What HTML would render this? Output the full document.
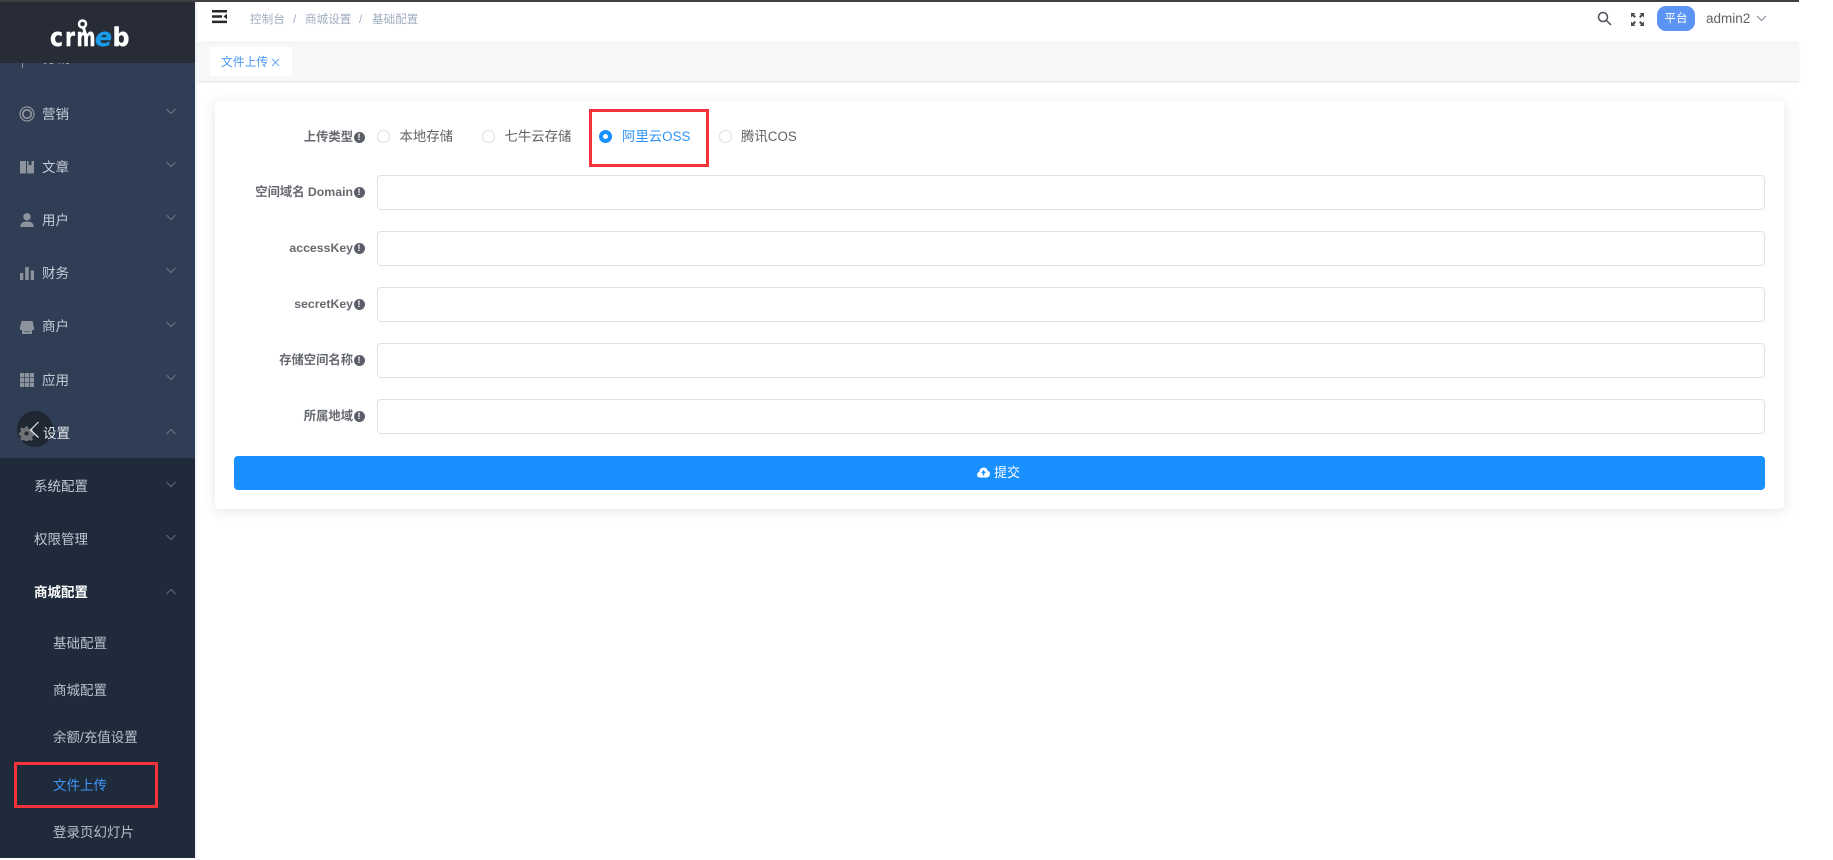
<!DOCTYPE html>
<html lang="zh"><head><meta charset="utf-8"><title>文件上传</title>
<style>
html,body{margin:0;padding:0;background:#fff;width:1833px;height:860px;overflow:hidden}
body{position:relative;font-family:"Liberation Sans","Noto Sans CJK SC",sans-serif;font-size:13.5px;color:#515a6e}
.a{position:absolute;white-space:nowrap}
.t{position:absolute;white-space:nowrap;line-height:20px;height:20px;transform:translateY(-10px)}
#side{position:absolute;left:0;top:2px;width:195px;height:856px;background:#2f3e55;overflow:hidden}
#sub{position:absolute;left:0;top:456px;width:195px;height:400px;background:#1f2b3b}
.m{color:#c4ccd6;font-size:13.5px;left:42px}
.s{color:#c0c8d2;font-size:13.5px;left:34px}
.ss{color:#b8c0ca;font-size:13.5px;left:53px}
.ch{position:absolute;left:165px;width:12px;height:7px}
.ico{position:absolute;left:20px;width:14px;height:14px}
.lb{position:absolute;right:1480px;text-align:right;font-weight:bold;font-size:12.3px;color:#666a70;line-height:20px;white-space:nowrap;transform:translateY(-10px)}
.inf{position:absolute;left:353.500px;width:11px;height:11px;border-radius:50%;background:#5a5e66;color:#fff;font-size:9px;line-height:11px;text-align:center;font-weight:bold}
.inp{position:absolute;left:377px;width:1388px;height:35px;box-sizing:border-box;border:1px solid #dfe1e7;border-radius:4px;background:#fff}
.r{position:absolute;top:130px;width:13px;height:13px;box-sizing:border-box;border:1px solid #dcdee2;border-radius:50%;background:#fff}
.rt{font-size:13.400px;color:#606266;top:137px}
.lg{font-family:"DejaVu Sans",sans-serif;font-weight:bold;font-size:26px;fill:#fff;stroke:#fff;stroke-width:.4;stroke-linejoin:round}
</style></head><body>
<div class="a" style="left:0;top:0;width:1799px;height:2px;background:#3f3f42"></div>

<div id="side">
 <div id="sub"></div>
</div>
<div class="a" style="left:0;top:2px;width:195px;height:61px;background:#282c37"></div>
<div class="a" style="left:195px;top:2px;width:2px;height:856px;background:#f0f2f5"></div>

<!-- logo -->
<svg class="a" style="left:45px;top:15px" width="90" height="40" viewBox="0 0 90 40">
 <text class="lg" x="5" y="31" textLength="13" lengthAdjust="spacingAndGlyphs">c</text>
 <text class="lg" x="20" y="31" textLength="10" lengthAdjust="spacingAndGlyphs">r</text>
 <text class="lg" x="31.500" y="31" textLength="19" lengthAdjust="spacingAndGlyphs">m</text>
 <text class="lg" x="50" y="31" textLength="17" lengthAdjust="spacingAndGlyphs" style="fill:#1a9be8;stroke:#1a9be8;font-style:italic">e</text>
 <text class="lg" x="67.500" y="31" textLength="17" lengthAdjust="spacingAndGlyphs">b</text>
 <circle cx="37.500" cy="9" r="3.500" fill="none" stroke="#fff" stroke-width="2.500"/>
 <path d="M38.500 12.500l1.500 5.500" stroke="#fff" stroke-width="3" fill="none"/>
</svg>

<!-- clipped partial item -->
<div class="a" style="left:0;top:63px;width:195px;height:6px;overflow:hidden">
 <div class="t m" style="top:-4px;left:43px;color:#aab3bf">分销</div>
 <div class="a" style="left:22px;top:0;width:1px;height:5px;background:#8b94a1"></div>
</div>

<!-- menu icons -->
<svg class="ico" style="top:106px;left:19px;width:16px;height:16px" viewBox="0 0 16 16" fill="none" stroke="#8d939c"><circle cx="8" cy="8" r="7" stroke-width="1.300"/><circle cx="8" cy="8" r="4.200" stroke-width="1.800"/></svg>
<svg class="ico" style="top:160px" viewBox="0 0 14 14" fill="#8d939c"><path d="M0 1h6v12.500H0zM7 1h1.500v4.500l1.500-1 1.500 1V1H14v12.500H7z"/></svg>
<svg class="ico" style="top:213px" viewBox="0 0 14 14" fill="#8d939c"><circle cx="7" cy="3.800" r="3.700"/><path d="M.3 14c0-4 2.700-5.500 6.700-5.500s6.700 1.500 6.700 5.500z"/></svg>
<svg class="ico" style="top:266px" viewBox="0 0 14 14" fill="#8d939c"><path d="M0 7h3.300v7H0zM5.300 1h3.400v13H5.300zM10.700 4.500H14V14h-3.300z"/></svg>
<svg class="ico" style="top:320px" viewBox="0 0 14 14" fill="#8d939c"><path d="M1.500 1h11L14 7.500v2.500H0V7.500zM2 10h10V14H2z"/><path d="M4 11h6v1H4z" fill="#5d6673"/></svg>
<svg class="ico" style="top:373px" viewBox="0 0 14 14" fill="#8d939c"><path d="M0 0h4.200v4.200H0zM4.900 0h4.200v4.200H4.900zM9.800 0H14v4.200H9.800zM0 4.900h4.200v4.200H0zM4.900 4.900h4.200v4.200H4.900zM9.800 4.900H14v4.200H9.800zM0 9.800h4.200V14H0zM4.900 9.800h4.200V14H4.900zM9.800 9.800H14V14H9.800z"/></svg>

<!-- collapse button -->
<div class="a" style="left:17px;top:411px;width:36px;height:36px;border-radius:50%;background:#1f2733"></div>
<svg class="ico" style="top:426px;left:19px;width:15px;height:15px" viewBox="0 0 14 14" fill="#6f7276"><path d="M5.800 0h2.400l.4 2 1.500.7 1.800-1 1.600 1.800-1.100 1.600.6 1.500 2 .4v2.400l-2 .4-.6 1.500 1.100 1.700-1.700 1.600-1.700-1-1.500.6-.4 1.800H5.800l-.4-1.900-1.500-.6-1.700 1L.5 12.300l1-1.700-.6-1.500L-1 8.700V6.300l1.900-.4.600-1.500-1-1.700L2.200 1l1.700 1 1.500-.6z" transform="translate(.6 .4) scale(.93)"/><circle cx="7" cy="7" r="2" fill="#242c38"/></svg>
<svg class="a" style="left:29px;top:421px" width="11" height="18" viewBox="0 0 11 18" fill="none" stroke="#e4e6e9" stroke-width="1.200"><path d="M9.500 1 1.500 9l8 7.500"/></svg>

<!-- menu text -->
<div class="t m" style="top:115px">营销</div>
<div class="t m" style="top:168px">文章</div>
<div class="t m" style="top:221px">用户</div>
<div class="t m" style="top:274px">财务</div>
<div class="t m" style="top:327px">商户</div>
<div class="t m" style="top:381px">应用</div>
<div class="t m" style="top:434px;left:43px;color:#e6e9ed">设置</div>
<div class="t s" style="top:487px">系统配置</div>
<div class="t s" style="top:540px">权限管理</div>
<div class="t s" style="top:593px;color:#fff;font-weight:bold">商城配置</div>
<div class="t ss" style="top:644px">基础配置</div>
<div class="t ss" style="top:691px">商城配置</div>
<div class="t ss" style="top:738px">余额/充值设置</div>
<div class="t ss" style="top:786px;color:#3f95f5">文件上传</div>
<div class="t ss" style="top:832.500px">登录页幻灯片</div>

<!-- chevrons -->
<svg class="ch" style="top:108px" viewBox="0 0 12 7" fill="none" stroke="#6c7888"><path d="M1.500 1 6 5.500 10.500 1"/></svg>
<svg class="ch" style="top:161px" viewBox="0 0 12 7" fill="none" stroke="#6c7888"><path d="M1.500 1 6 5.500 10.500 1"/></svg>
<svg class="ch" style="top:214px" viewBox="0 0 12 7" fill="none" stroke="#6c7888"><path d="M1.500 1 6 5.500 10.500 1"/></svg>
<svg class="ch" style="top:267px" viewBox="0 0 12 7" fill="none" stroke="#6c7888"><path d="M1.500 1 6 5.500 10.500 1"/></svg>
<svg class="ch" style="top:321px" viewBox="0 0 12 7" fill="none" stroke="#6c7888"><path d="M1.500 1 6 5.500 10.500 1"/></svg>
<svg class="ch" style="top:374px" viewBox="0 0 12 7" fill="none" stroke="#6c7888"><path d="M1.500 1 6 5.500 10.500 1"/></svg>
<svg class="ch" style="top:428px" viewBox="0 0 12 7" fill="none" stroke="#6c7888"><path d="M1.500 6 6 1.500 10.500 6"/></svg>
<svg class="ch" style="top:481px" viewBox="0 0 12 7" fill="none" stroke="#5f6b7a"><path d="M1.500 1 6 5.500 10.500 1"/></svg>
<svg class="ch" style="top:534px" viewBox="0 0 12 7" fill="none" stroke="#5f6b7a"><path d="M1.500 1 6 5.500 10.500 1"/></svg>
<svg class="ch" style="top:588px" viewBox="0 0 12 7" fill="none" stroke="#5f6b7a"><path d="M1.500 6 6 1.500 10.500 6"/></svg>

<div class="a" style="left:14px;top:762px;width:144px;height:46px;box-sizing:border-box;border:3px solid #f5333a"></div>

<!-- header -->
<svg class="a" style="left:211px;top:9px" width="17" height="16" viewBox="0 0 17 16" fill="#26282c"><path d="M1 1h15v2.500H1zM1 6.300h10v2.500H1zM1 11.600h15v2.500H1zM16 4.800v5.400l-3.500-2.700z"/></svg>
<div class="t" style="left:250px;top:20px;font-size:11.600px;color:#a0aec0">控制台</div>
<div class="t" style="left:293px;top:20px;font-size:11.600px;color:#a0aec0">/</div>
<div class="t" style="left:305px;top:20px;font-size:11.600px;color:#a0aec0">商城设置</div>
<div class="t" style="left:359px;top:20px;font-size:11.600px;color:#a0aec0">/</div>
<div class="t" style="left:372px;top:20px;font-size:11.600px;color:#a0aec0">基础配置</div>

<svg class="a" style="left:1597px;top:11px" width="15" height="15" viewBox="0 0 15 15" fill="none" stroke="#4a4f57" stroke-width="1.500"><circle cx="6" cy="6" r="4.500"/><path d="M9.500 9.500l4.500 4.500"/></svg>
<svg class="a" style="left:1630px;top:12px" width="15" height="15" viewBox="0 0 15 15" fill="#4a4f57"><path d="M1 1h4.500L4 2.500l2 2L4.500 6l-2-2L1 5.500zM14 1v4.500L12.500 4l-2 2L9 4.500l2-2L9.500 1zM1 14V9.500L2.500 11l2-2L6 10.500l-2 2L5.500 14zM14 14H9.500l1.500-1.500-2-2L10.500 9l2 2L14 9.500z"/></svg>
<div class="a" style="left:1657px;top:6px;width:38px;height:25px;border-radius:9px;background:#5b94f5;color:#fff;font-size:11.600px;line-height:25px;text-align:center">平台</div>
<div class="t" style="left:1706px;top:19px;font-size:13.500px;color:#606266">admin2</div>
<svg class="a" style="left:1756px;top:15px" width="11" height="7" viewBox="0 0 11 7" fill="none" stroke="#808695"><path d="M1 1l4.500 4.500L10 1"/></svg>

<!-- tags bar -->
<div class="a" style="left:197px;top:42px;width:1602px;height:40px;background:#f5f7f9;box-shadow:0 1px 2px rgba(0,0,0,.06);border-top:1px solid #eef0f3;border-bottom:1px solid #e8eaec;box-sizing:border-box"></div>
<div class="a" style="left:210px;top:47px;width:82px;height:29px;background:#fff"></div>
<div class="t" style="left:221px;top:62px;font-size:11.800px;color:#4a96f5">文件上传</div>
<svg class="a" style="left:271px;top:58px" width="9" height="9" viewBox="0 0 9 9" fill="none" stroke="#6aa5f0"><path d="M1 1l7 7M8 1L1 8"/></svg>

<!-- card -->
<div class="a" style="left:215px;top:101px;width:1569px;height:408px;background:#fff;border-radius:4px;box-shadow:0 2px 12px rgba(40,60,110,.13)"></div>

<!-- row 1 -->
<div class="lb" style="top:137px">上传类型</div><div class="inf" style="top:131.500px">!</div>
<div class="r" style="left:376.500px"></div><div class="t rt" style="left:399.500px">本地存储</div>
<div class="r" style="left:481.500px"></div><div class="t rt" style="left:504.500px">七牛云存储</div>
<div class="r" style="left:598.500px;border:0;background:#1890ff"></div><div class="a" style="left:602.500px;top:134px;width:5px;height:5px;border-radius:50%;background:#fff"></div>
<div class="t rt" style="left:622px;color:#2d95f7">阿里云OSS</div>
<div class="r" style="left:718.500px"></div><div class="t rt" style="left:741px">腾讯COS</div>
<div class="a" style="left:589px;top:109px;width:120px;height:58px;box-sizing:border-box;border:3px solid #f5333a"></div>

<!-- rows -->
<div class="lb" style="top:192px">空间域名 Domain</div><div class="inf" style="top:186.500px">!</div><div class="inp" style="top:175px"></div>
<div class="lb" style="top:248px">accessKey</div><div class="inf" style="top:242.500px">!</div><div class="inp" style="top:231px"></div>
<div class="lb" style="top:304px">secretKey</div><div class="inf" style="top:298.500px">!</div><div class="inp" style="top:287px"></div>
<div class="lb" style="top:360px">存储空间名称</div><div class="inf" style="top:354.500px">!</div><div class="inp" style="top:343px"></div>
<div class="lb" style="top:416px">所属地域</div><div class="inf" style="top:410.500px">!</div><div class="inp" style="top:399px"></div>

<!-- submit -->
<div class="a" style="left:234px;top:456px;width:1530.500px;height:34px;background:#1890ff;border-radius:4px"></div>
<svg class="a" style="left:977px;top:467px" width="13" height="11" viewBox="0 0 13 11" fill="#fff"><path d="M3 10.500C1.300 10.500 0 9.300 0 7.700 0 6.300 1 5.200 2.300 5 2.500 2.500 4.300.5 6.700.5c2 0 3.600 1.300 4 3.300 1.300.4 2.300 1.600 2.300 3.100 0 2-1.500 3.600-3.400 3.600z"/><path d="M6.500 3 4 6h1.700v2.500h1.600V6H9z" fill="#1890ff"/></svg>
<div class="t" style="left:994px;top:473px;font-size:13px;color:#fff">提交</div>
</body></html>
